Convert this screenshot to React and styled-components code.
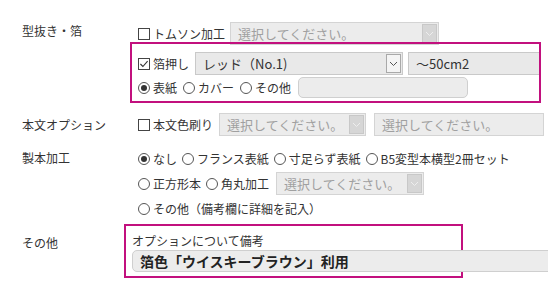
import React from "react";
import styled, { createGlobalStyle } from "styled-components";

const GlobalStyle = createGlobalStyle`
  html, body {
    margin: 0;
    padding: 0;
    background: #fff;
  }
  body {
    font-family: "Noto Sans CJK JP", "Noto Sans", sans-serif;
    color: #333;
  }
`;

const MAGENTA = "#c2107e";

const Page = styled.div`
  width: 548px;
  height: 292px;
  overflow: hidden;
  padding-top: 22px;
  box-sizing: border-box;
`;

const Section = styled.div`
  display: flex;
  margin-top: ${(p) => p.$mt || 0}px;
`;

const Label = styled.div`
  width: 138px;
  flex-shrink: 0;
  box-sizing: border-box;
  padding-left: 22px;
  padding-top: ${(p) => p.$pt || 0}px;
  font-size: 12px;
  line-height: 18px;
  color: #333;
`;

const Body = styled.div`
  flex: 1;
  min-width: 0;
  display: flex;
  flex-direction: column;
`;

const Line = styled.div`
  display: flex;
  align-items: center;
  height: ${(p) => p.$h || 23}px;
  margin-top: ${(p) => p.$mt || 0}px;
  white-space: nowrap;
`;

const HighlightBox = styled.div`
  border: 2px solid ${MAGENTA};
  box-sizing: border-box;
  width: ${(p) => p.$w}px;
  margin-left: ${(p) => p.$ml}px;
  margin-top: ${(p) => p.$mt || 0}px;
  padding: ${(p) => p.$pad};
  overflow: ${(p) => (p.$clip ? "hidden" : "visible")};
`;

const Box = styled.span`
  width: 12px;
  height: 12px;
  flex-shrink: 0;
  box-sizing: border-box;
  border: 1px solid #444;
  background: #fff;
  margin-right: 3px;
  display: inline-flex;
  align-items: center;
  justify-content: center;
`;

const Radio = styled.span`
  width: 12px;
  height: 12px;
  flex-shrink: 0;
  box-sizing: border-box;
  border: 1px solid #555;
  border-radius: 50%;
  background: #fff;
  margin-right: 3px;
  display: inline-flex;
  align-items: center;
  justify-content: center;

  &::after {
    content: "";
    display: ${(p) => (p.$on ? "block" : "none")};
    width: 6px;
    height: 6px;
    border-radius: 50%;
    background: #333;
  }
`;

const OptText = styled.span`
  font-size: 12px;
  line-height: 16px;
  color: #333;
  margin-right: ${(p) => (p.$mr !== undefined ? p.$mr : 5)}px;
`;

const Select = styled.div`
  width: ${(p) => p.$w}px;
  height: 23px;
  flex-shrink: 0;
  box-sizing: border-box;
  border: 1px solid ${(p) => (p.$active ? "#c9c9c9" : "#d4d4d4")};
  background: ${(p) => (p.$active ? "#e9e9e9" : "#ececec")};
  display: flex;
  align-items: center;
  justify-content: space-between;
  margin-right: ${(p) => p.$mr || 0}px;
`;

const SelectText = styled.span`
  font-size: 13px;
  line-height: 18px;
  padding-left: 7px;
  color: ${(p) => (p.$active ? "#333" : "#a0a0a0")};
`;

const Arrow = styled.span`
  width: 15px;
  height: 19px;
  margin-right: 1px;
  box-sizing: border-box;
  border: 1px solid ${(p) => (p.$active ? "#a9a9a9" : "#c8c8c8")};
  background: ${(p) => (p.$active ? "#f4f4f4" : "#d6d6d6")};
  display: flex;
  align-items: center;
  justify-content: center;
`;

const TextInput = styled.div`
  width: ${(p) => p.$w}px;
  height: ${(p) => p.$h}px;
  flex-shrink: 0;
  box-sizing: border-box;
  border: 1px solid #cfcfcf;
  border-radius: ${(p) => p.$r || "5px"};
  background: #ececec;
  display: flex;
  align-items: center;
  padding-left: 7px;
  font-size: 14px;
  font-weight: 700;
  color: #222;
`;

const NoteLabel = styled.div`
  font-size: 12px;
  line-height: 18px;
  color: #333;
`;

const Check = ({ on }) => (
  <Box>
    {on && (
      <svg width="10" height="10" viewBox="0 0 10 10">
        <path d="M1.4 5 L3.9 7.5 L8.6 2.2" fill="none" stroke="#333" strokeWidth="1.1" />
      </svg>
    )}
  </Box>
);

const Chevron = ({ active }) => (
  <svg width="9" height="6" viewBox="0 0 9 6">
    <path
      d="M1 1 L4.5 4.5 L8 1"
      fill="none"
      stroke={active ? "#555" : "#eeeeee"}
      strokeWidth="1"
    />
  </svg>
);

const Dropdown = ({ w, text, active, mr, noArrow }) => (
  <Select $w={w} $active={active} $mr={mr}>
    <SelectText $active={active}>{text}</SelectText>
    {!noArrow && (
      <Arrow $active={active}>
        <Chevron active={active} />
      </Arrow>
    )}
  </Select>
);

const PLACEHOLDER = "選択してください。";

export default function App() {
  return (
    <Page>
      <GlobalStyle />

      <Section>
        <Label $pt={0}>型抜き・箔</Label>
        <Body>
          <Line>
            <Check />
            <OptText>トムソン加工</OptText>
            <Dropdown w={209} text={PLACEHOLDER} />
          </Line>
          <HighlightBox $w={411} $ml={-8} $mt={-3} $pad="8px 0 3px 6px" $clip>
            <Line>
              <Check on />
              <OptText $mr={6}>箔押し</OptText>
              <Dropdown w={208} text="レッド（No.1)" active mr={5} />
              <Dropdown w={150} text="～50cm2" active />
            </Line>
            <Line $h={21} $mt={2}>
              <Radio $on />
              <OptText $mr={6}>表紙</OptText>
              <Radio />
              <OptText $mr={6}>カバー</OptText>
              <Radio />
              <OptText $mr={7}>その他</OptText>
              <TextInput $w={170} $h={21} />
            </Line>
          </HighlightBox>
        </Body>
      </Section>

      <Section $mt={10}>
        <Label $pt={3}>本文オプション</Label>
        <Body>
          <Line>
            <Check />
            <OptText $mr={6}>本文色刷り</OptText>
            <Dropdown w={147} text={PLACEHOLDER} mr={8} />
            <Dropdown w={170} text={PLACEHOLDER} noArrow />
          </Line>
        </Body>
      </Section>

      <Section $mt={10}>
        <Label $pt={3}>製本加工</Label>
        <Body>
          <Line $h={25}>
            <Radio $on />
            <OptText>なし</OptText>
            <Radio />
            <OptText>フランス表紙</OptText>
            <Radio />
            <OptText>寸足らず表紙</OptText>
            <Radio />
            <OptText>B5変型本横型2冊セット</OptText>
          </Line>
          <Line $h={25}>
            <Radio />
            <OptText>正方形本</OptText>
            <Radio />
            <OptText $mr={7}>角丸加工</OptText>
            <Dropdown w={148} text={PLACEHOLDER} />
          </Line>
          <Line $h={25}>
            <Radio />
            <OptText>その他（備考欄に詳細を記入）</OptText>
          </Line>
        </Body>
      </Section>

      <Section $mt={3}>
        <Label $pt={10}>その他</Label>
        <Body>
          <HighlightBox $w={339} $ml={-14} $pad="6px 0 4px 6px">
            <NoteLabel>オプションについて備考</NoteLabel>
            <TextInput $w={420} $h={22} $r="5px 0 0 5px">
              箔色「ウイスキーブラウン」利用
            </TextInput>
          </HighlightBox>
        </Body>
      </Section>
    </Page>
  );
}
